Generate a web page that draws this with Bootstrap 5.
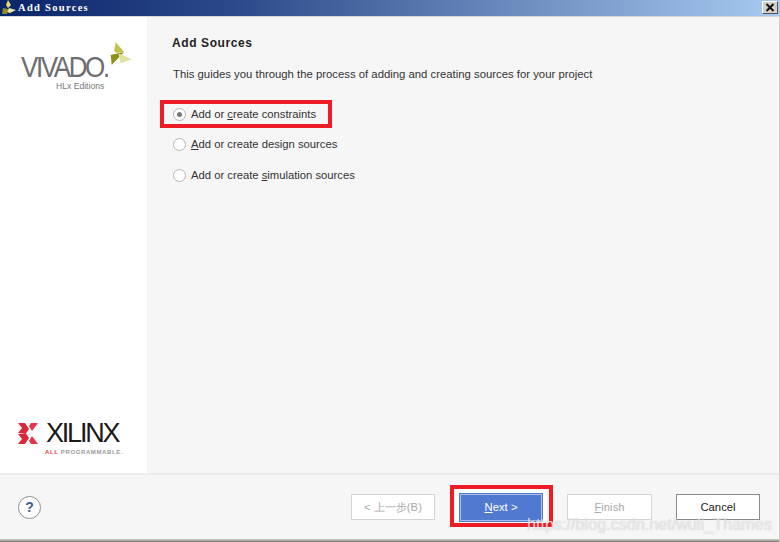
<!DOCTYPE html>
<html lang="en">
<head>
<meta charset="utf-8">
<title>Add Sources</title>
<link href="https://cdn.jsdelivr.net/npm/bootstrap@5.3.0/dist/css/bootstrap.min.css" rel="stylesheet">
<style>
html,body{margin:0;height:542px;overflow:hidden;background:#f6f6f6;}
body{font-family:"Liberation Sans",Arial,sans-serif;font-size:12px;color:#333;}
.dlg{width:780px;height:542px;position:relative;}
.tbar{height:16px;flex:none;background:linear-gradient(90deg,#0a246a 0%,#2c4a8a 30%,#7c9ccb 75%,#a6caf0 100%);color:#fff;font-family:"Liberation Serif",serif;font-weight:700;font-size:10.5px;letter-spacing:1.3px;line-height:15px;padding-left:1px;gap:1px;}
.tclose{width:16px;height:13px;margin-right:2px;margin-top:1px;background:#d4d0c8;border:1px solid;border-color:#fff #555 #555 #fff;}
.topline{height:1px;flex:none;background:#d8d8d8;}
.side{width:147px;flex:none;background:#fff;padding:0;}
.vlogo{height:80px;position:relative;padding:40px 0 0 21px;}
.vword{font-size:26px;line-height:22px;color:#6d6e71;letter-spacing:-2.4px;white-space:nowrap;transform:scaleY(1.14);transform-origin:0 100%;}
.hlx{position:absolute;left:56px;top:64px;font-size:8.6px;color:#777;line-height:10px;white-space:nowrap;}
.vleaf{position:absolute;left:0;top:0;}
.xlogo{padding:0 0 17px 18px;}
.xword{font-size:27px;line-height:24px;color:#1a1a1a;letter-spacing:-2.2px;font-weight:400;}
.xrow{gap:8px;}
.xsub{font-size:6px;line-height:7px;font-weight:700;color:#999;letter-spacing:.62px;padding-left:27px;margin-top:4px;white-space:nowrap;}
.xsub b{color:#e8444a;}
.pane{padding:19px 0 0 25px;min-width:0;}
.ttl{font-size:12px;font-weight:700;color:#222;letter-spacing:.6px;line-height:14px;margin:0 0 17px;}
.desc{font-size:11.33px;line-height:14px;color:#333;margin:0 0 18px 1px;white-space:nowrap;}
.opt{height:30.5px;margin:0;gap:5px;color:#333;padding-left:1px;font-size:11.25px;}
.rd{width:13px;height:13px;border-radius:50%;border:1px solid #b4b4b4;background:#fff;flex:none;position:relative;}
.rd.on::after{content:"";position:absolute;left:3px;top:3px;width:5px;height:5px;border-radius:50%;background:#777;}
.foot{height:66px;flex:none;border-top:2px solid #ececec;background:#f6f6f6;padding:0 20px 0 18px;}
.qm{width:23px;height:23px;border-radius:50%;border:1px solid #8e8e8e;background:#fff;color:#3d5a98;font-weight:700;font-size:14px;line-height:21px;text-align:center;}
.wbtn{width:84px;height:26px;border:1px solid #d4d4d4;background:#fff;color:#aaa;font-size:11.3px;line-height:24px;text-align:center;padding:0;border-radius:0;}
.wbtn:disabled{opacity:1;border-color:#d4d4d4;color:#aaa;background:#fff;}
.wbtn.wide{width:85px;}
.wbtn.dark{border-color:#8a8a8a;color:#222;}
.wbtn.prime{height:29px;background:#4f7ad0;border:1px solid #4f7ad0;color:#fff;box-shadow:inset 0 0 0 1px #a9bfea,0 0 0 4px #fff;line-height:26px;}
.gp{margin-left:24px;}
.redbox{position:absolute;border:4px solid #ee1c25;pointer-events:none;}
.rb1{left:160px;top:100px;width:172px;height:28px;}
.rb2{left:450px;top:485px;width:103px;height:42px;}
.mark-w{position:absolute;left:527px;top:515px;font-size:16.2px;line-height:18px;color:rgba(255,255,255,.72);text-shadow:0 0 1px rgba(120,120,120,.55);white-space:nowrap;}
.bframe{height:3px;flex:none;background:linear-gradient(#d8d5cf,#77736c);}
.rframe{position:absolute;right:0;top:16px;bottom:0;width:1px;background:#cfcfcf;}
u{text-underline-offset:1px;}
</style>
</head>
<body>
<div class="dlg d-flex flex-column">
  <div class="tbar d-flex align-items-start">
    <svg width="16" height="15" viewBox="0 0 16 15"><path d="M7 0l3 5-3 3-2-3z" fill="#e6d96a"/><path d="M1 14l1-6 5 1-1 5z" fill="#8f8d1f"/><path d="M8 8l7 2-6 3-3-1z" fill="#e8e6a8"/></svg>
    <span class="flex-grow-1">Add Sources</span>
    <div class="tclose d-flex align-items-center justify-content-center"><svg width="10" height="9" viewBox="0 0 10 9"><path d="M1.5 1l7 7M8.5 1l-7 7" stroke="#111" stroke-width="2"/></svg></div>
  </div>
  <div class="topline"></div>
  <div class="d-flex flex-grow-1" style="min-height:0">
    <div class="side d-flex flex-column justify-content-between">
      <div class="vlogo">
        <div class="vword">VIVADO.</div>
        <div class="hlx">HLx Editions</div>
        <svg class="vleaf" width="147" height="60" viewBox="0 17 147 60"><path d="M115.700 42.300L124 51.700 117 53 114 51z" fill="#c2c24a"/><path d="M110.700 55L124 52l-12.300 13z" fill="#8f8f1e"/><path d="M118.300 53.300L131.700 59.300 120.700 63.300z" fill="#dfe29a"/></svg>
      </div>
      <div class="xlogo">
        <div class="d-flex align-items-center xrow">
          <svg width="20" height="21" viewBox="0 0 20 21"><path d="M0 0h7l4 6-3 4.500-8-.5 4-5zM0 21h7l4-6-3-4.500-8 .5 4 5z" fill="#d8283a"/><path d="M20 0h-7l-2 3 3 5zM20 21h-7l-2-3 3-5z" fill="#e5334b"/></svg>
          <div class="xword">XILINX</div>
        </div>
        <div class="xsub"><b>ALL</b> PROGRAMMABLE.</div>
      </div>
    </div>
    <div class="pane flex-grow-1">
      <h1 class="ttl">Add Sources</h1>
      <p class="desc">This guides you through the process of adding and creating sources for your project</p>
      <div class="opt d-flex align-items-center"><span class="rd on"></span><span>Add or <u>c</u>reate constraints</span></div>
      <div class="opt d-flex align-items-center"><span class="rd"></span><span><u>A</u>dd or create design sources</span></div>
      <div class="opt d-flex align-items-center"><span class="rd"></span><span>Add or create <u>s</u>imulation sources</span></div>
    </div>
  </div>
  <div class="foot d-flex align-items-center">
    <div class="qm">?</div>
    <div class="ms-auto d-flex align-items-center">
      <button class="btn wbtn" disabled>&lt; 上一步(B)</button>
      <button class="btn wbtn prime gp"><u>N</u>ext &gt;</button>
      <button class="btn wbtn wide gp" disabled><u>F</u>inish</button>
      <button class="btn wbtn dark gp">Cancel</button>
    </div>
  </div>
  <div class="bframe"></div>
  <div class="rframe"></div>
  <div class="redbox rb1"></div>
  <div class="redbox rb2"></div>
  <div class="mark-w">https://blog.csdn.net/wuli_Thames</div>
</div>
<script src="https://cdn.jsdelivr.net/npm/bootstrap@5.3.0/dist/js/bootstrap.bundle.min.js"></script>
</body>
</html>
